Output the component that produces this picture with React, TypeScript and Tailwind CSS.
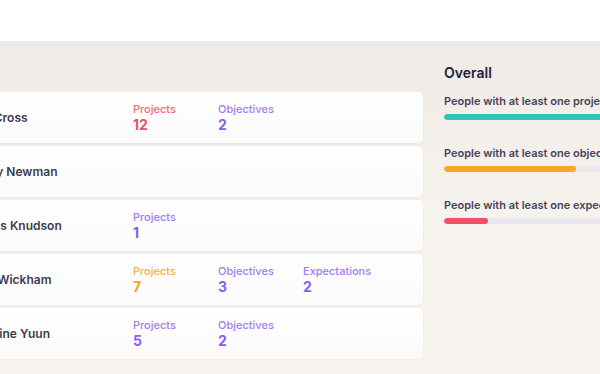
import React from 'react';

type Stat = { label: string; value: number; tone: 'red' | 'purple' | 'orange' };

interface Person {
  name: string;
  stats: Stat[];
}

const people: Person[] = [
  {
    name: 'Peter Cross',
    stats: [
      { label: 'Projects', value: 12, tone: 'red' },
      { label: 'Objectives', value: 2, tone: 'purple' },
    ],
  },
  { name: 'Jeremy Newman', stats: [] },
  { name: 'Thomas Knudson', stats: [{ label: 'Projects', value: 1, tone: 'purple' }] },
  {
    name: 'Oliver Wickham',
    stats: [
      { label: 'Projects', value: 7, tone: 'orange' },
      { label: 'Objectives', value: 3, tone: 'purple' },
      { label: 'Expectations', value: 2, tone: 'purple' },
    ],
  },
  {
    name: 'Catherine Yuun',
    stats: [
      { label: 'Projects', value: 5, tone: 'purple' },
      { label: 'Objectives', value: 2, tone: 'purple' },
    ],
  },
];

const toneClasses = {
  red: { label: 'text-[#f6657a]', value: 'text-[#f04d65]' },
  purple: { label: 'text-[#a17cf6]', value: 'text-[#8b5cf6]' },
  orange: { label: 'text-[#fbb03b]', value: 'text-[#f9a21b]' },
};

// widths are % of the 220px panel
const overall = [
  { label: 'People with at least one project', pct: 100, bar: 'bg-[#2cc5b7]' },
  { label: 'People with at least one objective', pct: 60, bar: 'bg-[#faa624]' },
  { label: 'People with at least one expectation', pct: 20, bar: 'bg-[#f34f66]' },
];

const PersonCard: React.FC<{ person: Person }> = ({ person }) => {
  return (
    <div className="flex h-[51px] items-center rounded-[5px] bg-gradient-to-b from-white to-[#fbfafa] pl-4 shadow-[0_1px_3px_rgba(120,100,80,0.08)]">
      <div className="w-[173px] shrink-0 text-[12px] font-semibold text-[#3c3c4d]">{person.name}</div>
      <div className="flex">
        {person.stats.map((stat) => (
          <div key={stat.label} className="flex w-[85px] flex-col">
            <span className={`text-[11px] leading-[14px] font-medium ${toneClasses[stat.tone].label}`}>
              {stat.label}
            </span>
            <span className={`text-[14px] leading-[18px] font-bold ${toneClasses[stat.tone].value}`}>
              {stat.value}
            </span>
          </div>
        ))}
      </div>
    </div>
  );
};

export default function App() {
  return (
    <div className="h-[374px] w-[600px] overflow-hidden font-['Inter',sans-serif]">
      <header className="h-[41px] bg-white" />
      <main className="flex h-[333px] bg-gradient-to-b from-[#efeae5] via-[#f6f2ed] to-[#f8f4ef] pt-[51px]">
        <section className="-ml-[56px] flex w-[479px] shrink-0 flex-col gap-[3px]">
          {people.map((p) => (
            <PersonCard key={p.name} person={p} />
          ))}
        </section>
        <aside className="ml-[21px] -mt-[28px] w-[220px] shrink-0">
          <h2 className="text-[14px] leading-[18px] font-semibold text-[#22223a]">Overall</h2>
          <div className="mt-[12px] flex flex-col gap-[26px]">
            {overall.map((row) => (
              <div key={row.label} className="whitespace-nowrap">
                <div className="text-[11px] leading-[14px] font-semibold text-[#45455a]">{row.label}</div>
                <div className="mt-[6px] h-[6px] w-full overflow-hidden rounded-full bg-[#e9e8ef]">
                  <div className={`h-full rounded-full ${row.bar}`} style={{ width: `${row.pct}%` }} />
                </div>
              </div>
            ))}
          </div>
        </aside>
      </main>
    </div>
  );
}
